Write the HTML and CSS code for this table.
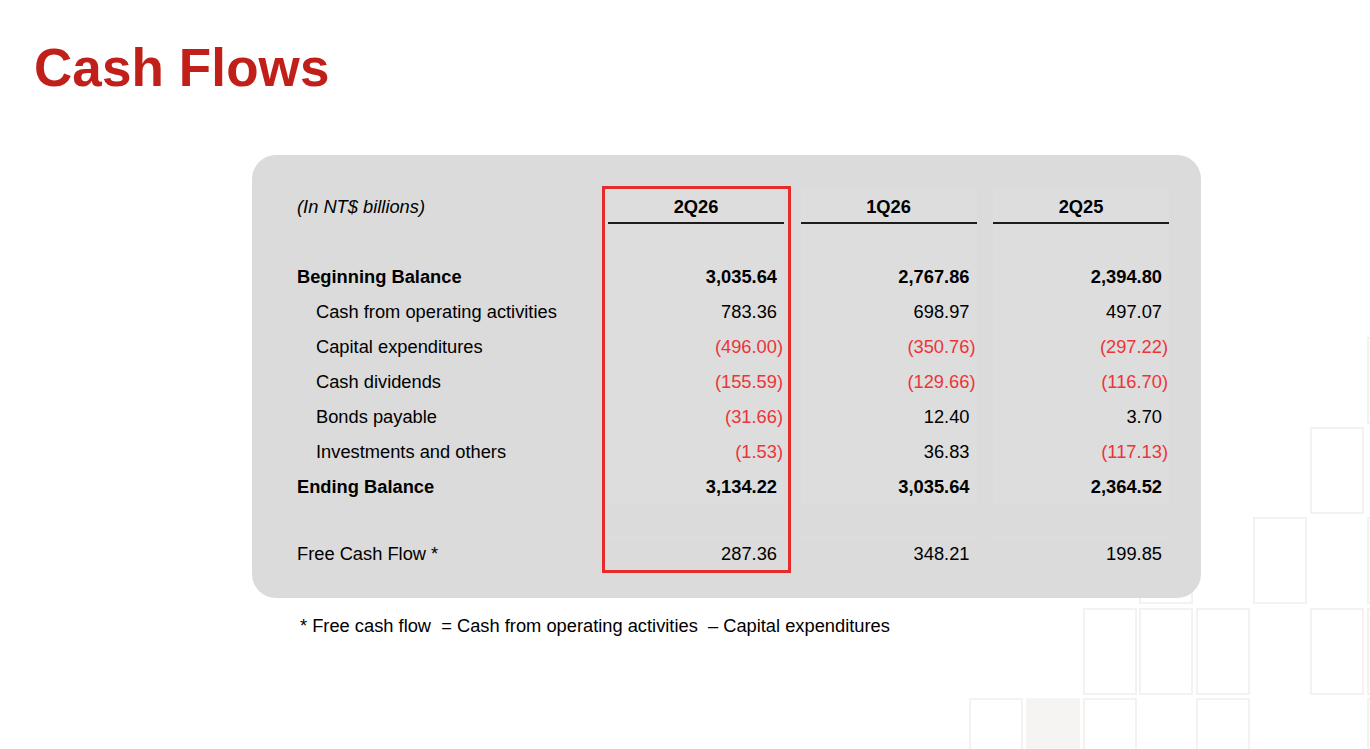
FILE: index.html
```html
<!DOCTYPE html>
<html lang="en">
<head>
<meta charset="utf-8">
<title>Cash Flows</title>
<link rel="stylesheet" href="styles.css">
</head>
<body>
<div class="slide">
  <div class="decor">
    <span class="sq r0 c7"></span>
    <span class="sq r1 c6"></span>
    <span class="sq r2 c3"></span>
    <span class="sq r2 c5"></span>
    <span class="sq r2 c7"></span>
    <span class="sq r3 c2"></span>
    <span class="sq r3 c3"></span>
    <span class="sq r3 c4"></span>
    <span class="sq r3 c6"></span>
    <span class="sq r3 c7"></span>
    <span class="sq r4 c0"></span>
    <span class="sq r4 c1 filled"></span>
    <span class="sq r4 c2"></span>
    <span class="sq r4 c4"></span>
    <span class="sq r4 c7"></span>
  </div>

  <h1 class="title">Cash Flows</h1>

  <section class="panel">
    <div class="table">
      <div class="lbl unit">(In NT$ billions)</div>
      <div class="cell hd">2Q26</div>
      <div class="cell hd">1Q26</div>
      <div class="cell hd">2Q25</div>

      <div class="lbl gap"></div>
      <div class="cell gap"></div>
      <div class="cell gap"></div>
      <div class="cell gap"></div>

      <div class="lbl strong">Beginning Balance</div>
      <div class="cell num strong">3,035.64</div>
      <div class="cell num strong">2,767.86</div>
      <div class="cell num strong">2,394.80</div>

      <div class="lbl sub">Cash from operating activities</div>
      <div class="cell num">783.36</div>
      <div class="cell num">698.97</div>
      <div class="cell num">497.07</div>

      <div class="lbl sub">Capital expenditures</div>
      <div class="cell num"><span class="neg">(496.00)</span></div>
      <div class="cell num"><span class="neg">(350.76)</span></div>
      <div class="cell num"><span class="neg">(297.22)</span></div>

      <div class="lbl sub">Cash dividends</div>
      <div class="cell num"><span class="neg">(155.59)</span></div>
      <div class="cell num"><span class="neg">(129.66)</span></div>
      <div class="cell num"><span class="neg">(116.70)</span></div>

      <div class="lbl sub">Bonds payable</div>
      <div class="cell num"><span class="neg">(31.66)</span></div>
      <div class="cell num">12.40</div>
      <div class="cell num">3.70</div>

      <div class="lbl sub">Investments and others</div>
      <div class="cell num"><span class="neg">(1.53)</span></div>
      <div class="cell num">36.83</div>
      <div class="cell num"><span class="neg">(117.13)</span></div>

      <div class="lbl strong">Ending Balance</div>
      <div class="cell num strong">3,134.22</div>
      <div class="cell num strong">3,035.64</div>
      <div class="cell num strong">2,364.52</div>

      <div class="lbl fcf">Free Cash Flow *</div>
      <div class="cell num fcf">287.36</div>
      <div class="cell num fcf">348.21</div>
      <div class="cell num fcf">199.85</div>
    </div>
    <div class="highlight"></div>
  </section>

  <p class="note">* Free cash flow &nbsp;= Cash from operating activities &nbsp;&ndash; Capital expenditures</p>
</div>
</body>
</html>
```

FILE: styles.css
```css
* {
  box-sizing: border-box;
}

html, body {
  margin: 0;
  padding: 0;
  background: #ffffff;
}

body {
  font-family: "Liberation Sans", Arial, sans-serif;
  color: #000000;
}

.slide {
  position: relative;
  width: 1370px;
  height: 749px;
  overflow: hidden;
  background: #ffffff;
}

/* decorative tile pattern, bottom right */
.decor {
  position: absolute;
  left: 969px;
  top: 337px;
  display: grid;
  grid-template-columns: repeat(8, 54px);
  grid-template-rows: repeat(5, 87px);
  column-gap: 2.8px;
  row-gap: 3.2px;
  z-index: 0;
}

.sq {
  border: 2px solid #f4f2f1;
}

.sq.filled {
  background: #f5f4f2;
  border-color: #f5f4f2;
}

.r0 { grid-row: 1; }
.r1 { grid-row: 2; }
.r2 { grid-row: 3; }
.r3 { grid-row: 4; }
.r4 { grid-row: 5; }
.c0 { grid-column: 1; }
.c1 { grid-column: 2; }
.c2 { grid-column: 3; }
.c3 { grid-column: 4; }
.c4 { grid-column: 5; }
.c5 { grid-column: 6; }
.c6 { grid-column: 7; }
.c7 { grid-column: 8; }

.title {
  position: relative;
  z-index: 1;
  margin: 0;
  padding: 41px 0 0 34px;
  font-size: 53px;
  line-height: 53px;
  font-weight: 700;
  color: #c1201a;
  letter-spacing: 0.1px;
}

.panel {
  position: relative;
  z-index: 1;
  margin: 61px 0 0 252px;
  width: 949px;
  height: 443px;
  padding: 34px 0 0 45px;
  background: #dbdbdb;
  border-radius: 24px;
}

.table {
  display: grid;
  grid-template-columns: 294.5px 176px 176px 176px;
  grid-auto-rows: 35px;
  column-gap: 16.5px;
  font-size: 18.3px;
}

.lbl {
  line-height: 35px;
  white-space: nowrap;
}

.gap {
  height: 36px;
}

.lbl.unit {
  font-style: italic;
  line-height: 20px;
  padding-top: 8px;
}

.lbl.sub {
  padding-left: 19px;
}

.strong {
  font-weight: 700;
}

.cell {
  background: #dddddd;
}

.cell.hd {
  font-weight: 700;
  text-align: center;
  line-height: 20px;
  padding: 8px 0 5px;
  border-bottom: 2px solid #1c1c1c;
}

.cell.num {
  text-align: right;
  line-height: 35px;
  padding-right: 7px;
}

.neg {
  color: #ec3538;
  margin-right: -6px;
}

.fcf {
  margin-top: 32px;
}

.lbl.fcf {
  line-height: 35px;
}

.highlight {
  position: absolute;
  left: 350px;
  top: 31px;
  width: 189px;
  height: 387px;
  border: 3px solid #e52b2b;
  pointer-events: none;
}

.note {
  position: relative;
  z-index: 1;
  margin: 18px 0 0 300px;
  font-size: 18.3px;
  line-height: 20px;
  white-space: nowrap;
}
```
